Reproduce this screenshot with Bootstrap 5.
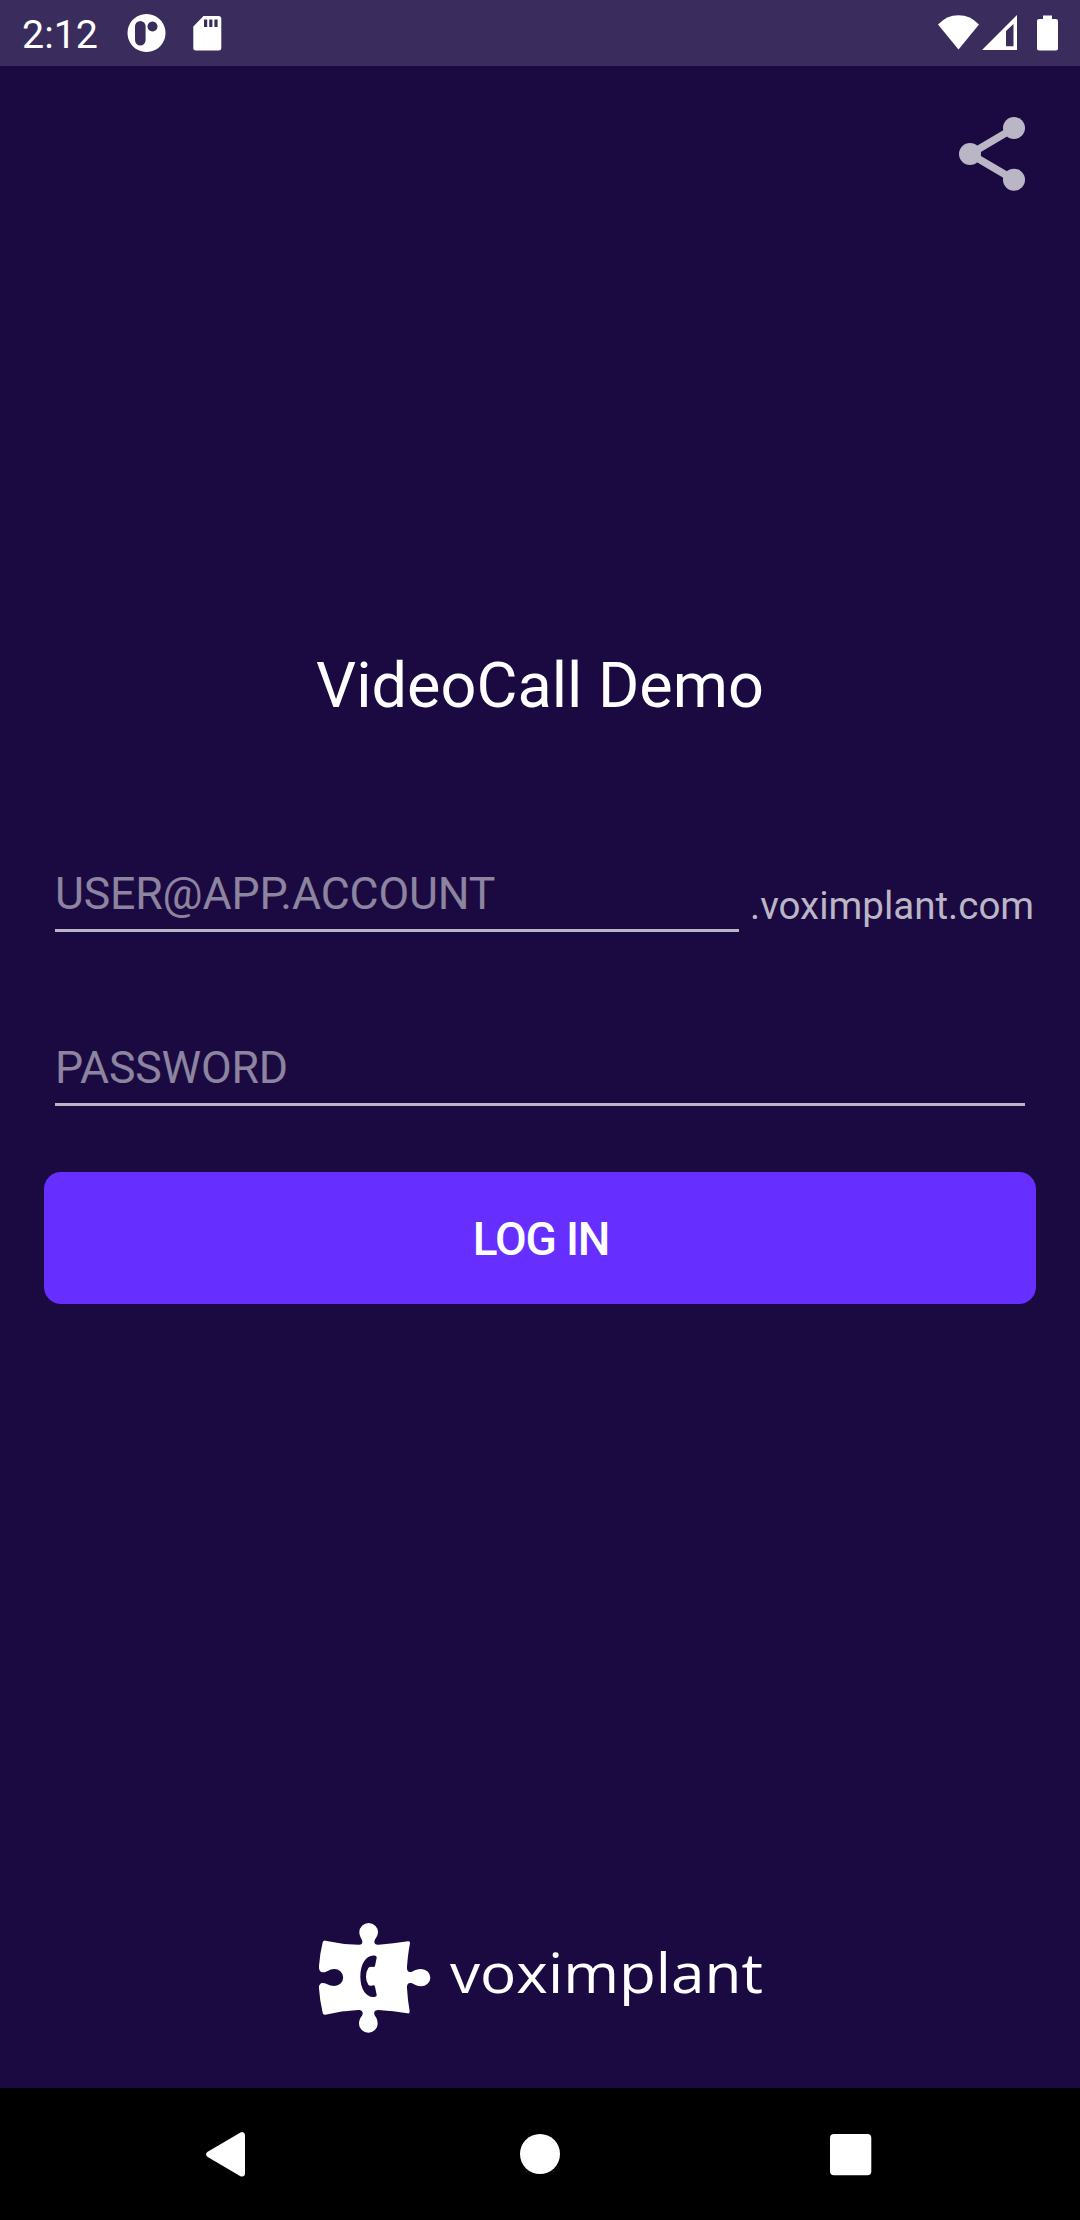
<!DOCTYPE html>
<html lang="en">
<head>
<meta charset="utf-8">
<meta name="viewport" content="width=device-width, initial-scale=1">
<title>VideoCall Demo</title>
<link href="https://cdn.jsdelivr.net/npm/bootstrap@5.3.0/dist/css/bootstrap.min.css" rel="stylesheet">
<style>
  body { background: #1b0a41; font-family: Roboto, "Noto Sans", sans-serif; color: #fff; }
  svg { display: block; flex: none; }
  .screen { width: 1080px; height: 2220px; overflow: hidden; }
  .status-bar { height: 66px; background: #3a2c5c; padding: 0 22px 0 22px; }
  .clock { font-size: 39.4px; line-height: 66px; padding-top: 3px; width: 95px; }
  .share-btn { margin: 51px 55px 0 0; color: #bbb6c6; }
  .app-title { font-size: 63px; line-height: 74px; font-weight: 400; margin: 458px 0 0; }
  .login-form { margin-top: 134px; }
  .field-row { padding-left: 55px; }
  .line-input, .line-input:focus { height: 75px; padding: 2px 0 0; border: 0; border-bottom: 3px solid #bbb6c6; border-radius: 0; background: transparent; color: #fff; font-size: 44.6px; line-height: 70px; letter-spacing: -.15px; box-shadow: none; }
  .line-input::placeholder { color: rgba(255,255,255,.5); opacity: 1; }
  .user-input { width: 684px; }
  .pass-input { width: 970px; }
  .suffix { font-size: 38.5px; line-height: 54px; margin-left: 11px; color: #bbb6c6; white-space: nowrap; position: relative; top: 1px; }
  .pass-row { margin-top: 99px; }
  .login-btn { --bs-btn-bg: #662eff; --bs-btn-hover-bg: #5a22f0; --bs-btn-border-color: #662eff; --bs-btn-color: #fff; margin: 66px 44px 0; height: 132px; border-radius: 17px; font-size: 46px; font-weight: 500; padding: 2px 0 0 2px; border: 0; letter-spacing: -1.2px; }
  .brand { margin: auto 0 48px 310px; }
  .nav-keys { height: 132px; padding: 0 175px; }
  .nav-keys button { padding: 0; border: 0; background: none; }
</style>
</head>
<body>
<div class="screen d-flex flex-column">
  <header class="status-bar d-flex align-items-center flex-shrink-0">
    <span class="clock">2:12</span>
    <svg class="me-auto" width="120" height="66" viewBox="117 0 120 66" fill="#fff">
      <path fill-rule="evenodd" d="M146.500 14a19 19 0 1 0 .01 0zM140.300 21a5.300 5.300 0 0 1 5.300 5.300v14a5.300 5.300 0 0 1-10.600 0v-14a5.300 5.300 0 0 1 5.300-5.300zM152.500 21.500a5 5 0 1 1-.01 0z"/>
      <path fill-rule="evenodd" d="M203.500 16H218.500Q221.300 16 221.300 19V48Q221.300 50.500 218.500 50.500H196Q193.300 50.500 193.300 48V26.500zM204 19.500v7.500h3.200v-7.500zM209.200 19.500v7.500h3.200v-7.500zM214.400 19.500v7.500h3.200v-7.500z"/>
    </svg>
    <svg width="124" height="66" viewBox="934 0 124 66" fill="#fff">
      <path d="M958.500 49.500L938 24.500Q946.500 15.200 958.500 15.200T979 24.500z"/>
      <path fill-rule="evenodd" d="M982 50L1017 15V50zM1006 31V46.200H1013.500V24z"/>
      <path d="M1043 15.500h9V19h4q2 0 2 2V48.500q0 2-2 2h-17q-2 0-2-2V21q0-2 2-2h4z"/>
    </svg>
  </header>

  <main class="d-flex flex-column flex-grow-1">
    <div class="share-btn align-self-end">
      <svg width="66" height="74" viewBox="959 117 66 74" fill="currentColor" role="img" aria-label="Share">
        <path d="M968.100 150.900L1012.100 125.100L1015.900 131.300L977.500 153.900L1015.900 176.400L1012.100 182.900L968.100 157.100z"/>
        <circle cx="970" cy="154" r="11"/>
        <circle cx="1014" cy="128" r="11"/>
        <circle cx="1014" cy="179.700" r="11"/>
      </svg>
    </div>
    <h1 class="app-title text-center">VideoCall Demo</h1>
    <form class="login-form d-flex flex-column">
      <div class="field-row d-flex align-items-end">
        <input class="form-control line-input user-input flex-shrink-0" type="text" placeholder="USER@APP.ACCOUNT">
        <span class="suffix">.voximplant.com</span>
      </div>
      <div class="field-row pass-row d-flex">
        <input class="form-control line-input pass-input" type="password" placeholder="PASSWORD">
      </div>
      <button class="btn login-btn" type="button">LOG IN</button>
    </form>
    <div class="brand d-flex">
      <svg width="130" height="130" viewBox="0 0 390 390" fill="#fff">
        <path fill-rule="evenodd" d="M46 92Q95 103 145 104Q158 105 157 95C156 86 148 80 148 66A28 27 0 0 1 204 66C204 80 194 86 193 95Q193 105 206 104Q250 101 294 94Q301 93 300 100Q294 130 291 170C290 184 297 188 306 185C316 180 322 177 333 177A28 26 0 0 1 333 229C322 229 314 224 306 220C297 217 290 221 291 235Q293 270 299 304Q300 312 292 310Q250 302 205 300C193 300 190 309 195 317C200 323 203 331 203 341A28 27 0 0 1 147 341C147 330 151 323 156 317C161 308 157 300 145 300Q95 302 46 314Q39 315 38 308Q29 270 27 235C26 225 31 219 39 219C51 219 55 228 73 228A26 25 0 0 0 73 177C57 177 52 187 40 187C31 187 26 180 27 168Q30 130 38 97Q40 91 46 92zM196 137Q201 138 200 143L195 168Q194 171 190 171L184 170Q178 170 175 174Q168 184 168 200Q168 215 175 224Q178 228 184 227L190 226Q194 226 195 230L200 254Q201 259 196 260C172 266 151 240 151 200C151 158 172 132 196 137z"/>
      </svg>
      <svg width="330" height="130" viewBox="440 1910 330 130" fill="#fff">
        <text x="450" y="1992.700" font-family="'Open Sans', 'Noto Sans', sans-serif" font-size="55" textLength="313" lengthAdjust="spacingAndGlyphs">voximplant</text>
      </svg>
    </div>
  </main>

  <nav class="nav-keys bg-black d-flex justify-content-between flex-shrink-0">
    <button type="button" aria-label="Back">
      <svg width="100" height="132" viewBox="175 2088 100 132"><path fill="#fff" stroke="#fff" stroke-width="6" stroke-linejoin="round" d="M209.200 2154.300L242 2135.200V2173.600z"/></svg>
    </button>
    <button type="button" aria-label="Home">
      <svg width="100" height="132" viewBox="490 2088 100 132"><circle cx="540" cy="2154" r="20" fill="#fff"/></svg>
    </button>
    <button type="button" aria-label="Recents">
      <svg width="100" height="132" viewBox="805 2088 100 132"><rect x="830" y="2134" width="41.300" height="41.300" rx="4" fill="#fff"/></svg>
    </button>
  </nav>
</div>
<script src="https://cdn.jsdelivr.net/npm/bootstrap@5.3.0/dist/js/bootstrap.bundle.min.js"></script>
</body>
</html>
